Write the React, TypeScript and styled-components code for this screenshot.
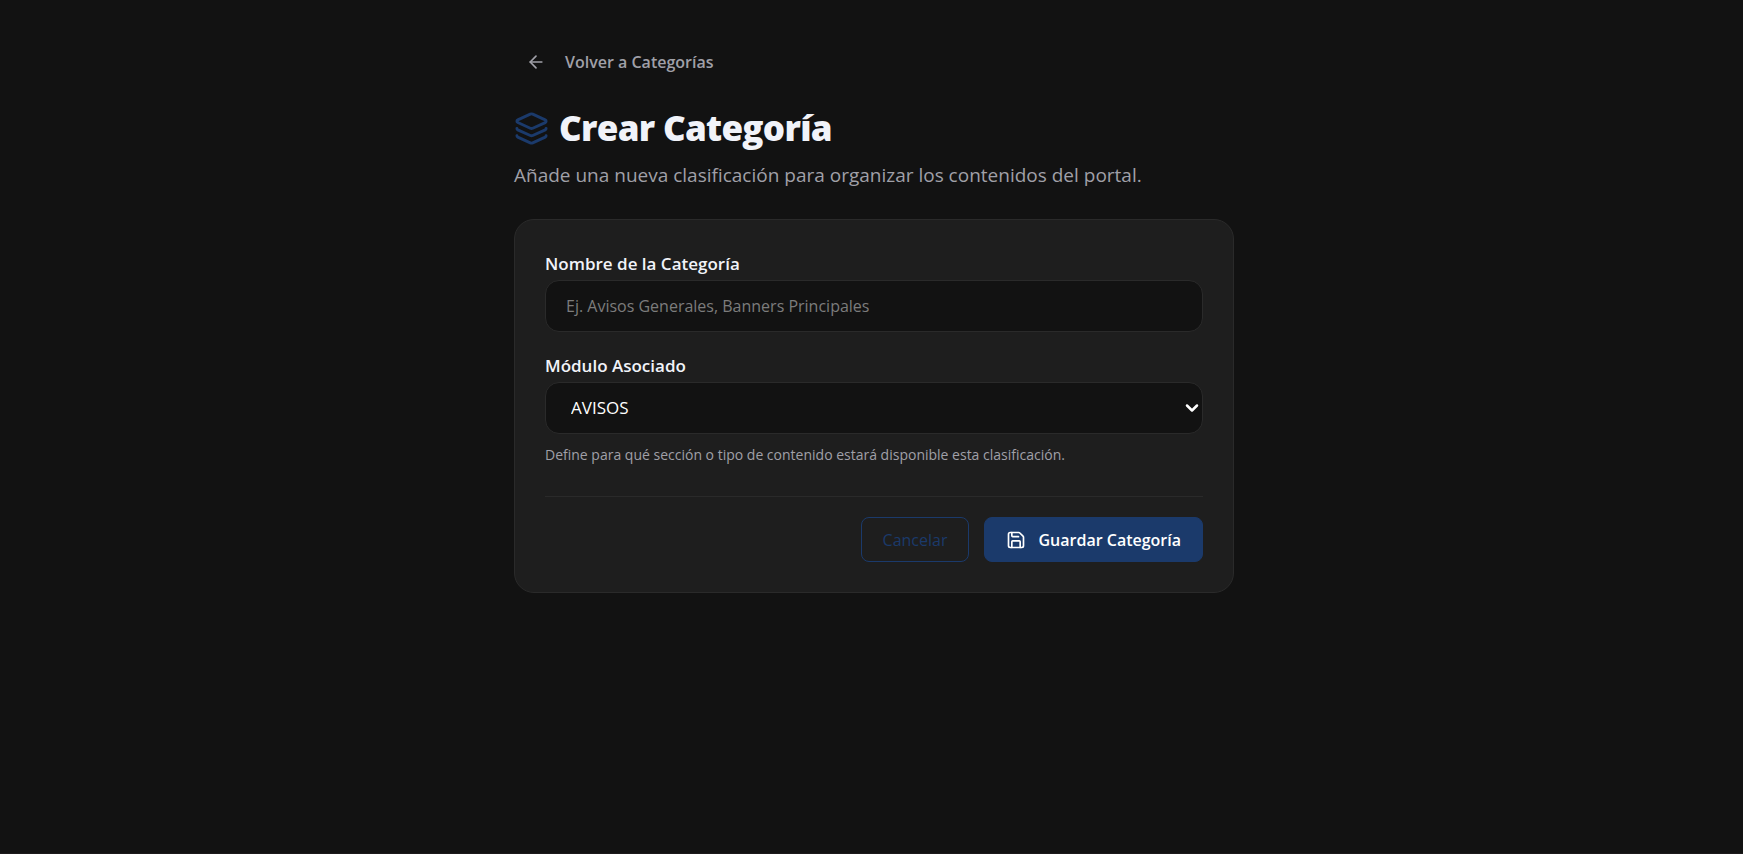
import React from "react";
import styled, { createGlobalStyle, css } from "styled-components";
import { ArrowLeft, ChevronDown, Layers, Save } from "lucide-react";

const GlobalStyle = createGlobalStyle`
  *, *::before, *::after { box-sizing: border-box; }
  body {
    margin: 0;
    background: #121212;
    color: #f1f3f9;
    font-family: "Segoe UI", "Open Sans", "Noto Sans", sans-serif;
    font-size: 16px;
    line-height: 24px;
  }
  button, input, select { font: inherit; }
`;

const Page = styled.main`
  min-height: 100vh;
  padding: 40px 16px 40px 21px;
  border-bottom: 1px solid #1c1a1b;
`;

const Container = styled.div`
  width: 100%;
  max-width: 720px;
  margin: 0 auto;
`;

const BackLink = styled.a`
  display: inline-flex;
  align-items: center;
  gap: 19px;
  height: 44px;
  padding: 0 12px;
  color: #a0a0a8;
  font-weight: 600;
  text-decoration: none;
`;

const Title = styled.h1`
  display: flex;
  align-items: center;
  gap: 10px;
  margin: 20px 0 0;
  font-size: 35px;
  line-height: 48px;
  font-weight: 800;
  letter-spacing: -0.02em;

  svg { color: #1b3a6b; }
`;

const Subtitle = styled.p`
  margin: 8px 0 29px;
  color: #a0a0a8;
  font-size: 19px;
  line-height: 30px;
`;

const Card = styled.form`
  padding: 30px;
  border: 1px solid #2a2a2a;
  border-radius: 20px;
  background: #1e1e1e;
`;

const Field = styled.div`
  display: flex;
  flex-direction: column;
  margin-bottom: 20px;
`;

const Label = styled.label`
  margin-bottom: 3px;
  font-size: 17px;
  line-height: 27px;
  font-weight: 600;
`;

const control = css`
  width: 100%;
  height: 52px;
  border: 1px solid #2a2a2a;
  border-radius: 14px;
  background-color: #121212;
  color: #ffffff;
  outline: none;

  &:focus-visible { border-color: #1b3a6b; }
`;

const TextInput = styled.input`
  ${control}
  padding: 0 20px;

  &::placeholder { color: #7c7c7c; opacity: 1; }
`;

const SelectBox = styled.div`
  display: grid;
  align-items: center;

  > * { grid-area: 1 / 1; }
  > svg {
    justify-self: end;
    margin-right: 1px;
    color: #ffffff;
    pointer-events: none;
  }
`;

const Select = styled.select`
  ${control}
  appearance: none;
  padding: 0 25px;
  font-size: 17px;
`;

const Help = styled.small`
  margin-top: 9px;
  color: #a0a0a8;
  font-size: 14px;
`;

const Actions = styled.div`
  display: flex;
  justify-content: flex-end;
  gap: 15px;
  margin-top: 29px;
  padding-top: 20px;
  border-top: 1px solid #2a2a2a;
`;

const Button = styled.button<{ $primary?: boolean }>`
  display: inline-flex;
  align-items: center;
  justify-content: center;
  gap: 12px;
  height: 45px;
  padding: 0 21px;
  border: 1px solid #1b3a6b;
  border-radius: 8px;
  background: ${(p) => (p.$primary ? "#1b3a6b" : "transparent")};
  color: ${(p) => (p.$primary ? "#ffffff" : "#1b3a6b")};
  font-weight: ${(p) => (p.$primary ? 600 : 500)};
  cursor: pointer;
`;

export default function App() {
  return (
    <>
      <GlobalStyle />
      <Page>
        <Container>
          <BackLink href="#categorias">
            <ArrowLeft size={20} aria-hidden />
            Volver a Categorías
          </BackLink>
          <Title>
            <Layers size={35} aria-hidden />
            Crear Categoría
          </Title>
          <Subtitle>
            Añade una nueva clasificación para organizar los contenidos del portal.
          </Subtitle>
          <Card onSubmit={(e) => e.preventDefault()}>
            <Field>
              <Label htmlFor="nombre">Nombre de la Categoría</Label>
              <TextInput
                id="nombre"
                type="text"
                placeholder="Ej. Avisos Generales, Banners Principales"
              />
            </Field>
            <Field>
              <Label htmlFor="modulo">Módulo Asociado</Label>
              <SelectBox>
                <Select id="modulo" defaultValue="AVISOS" aria-describedby="modulo-ayuda">
                  <option value="AVISOS">AVISOS</option>
                </Select>
                <ChevronDown size={20} strokeWidth={3} aria-hidden />
              </SelectBox>
              <Help id="modulo-ayuda">
                Define para qué sección o tipo de contenido estará disponible esta clasificación.
              </Help>
            </Field>
            <Actions>
              <Button type="button">Cancelar</Button>
              <Button type="submit" $primary>
                <Save size={20} aria-hidden />
                Guardar Categoría
              </Button>
            </Actions>
          </Card>
        </Container>
      </Page>
    </>
  );
}
